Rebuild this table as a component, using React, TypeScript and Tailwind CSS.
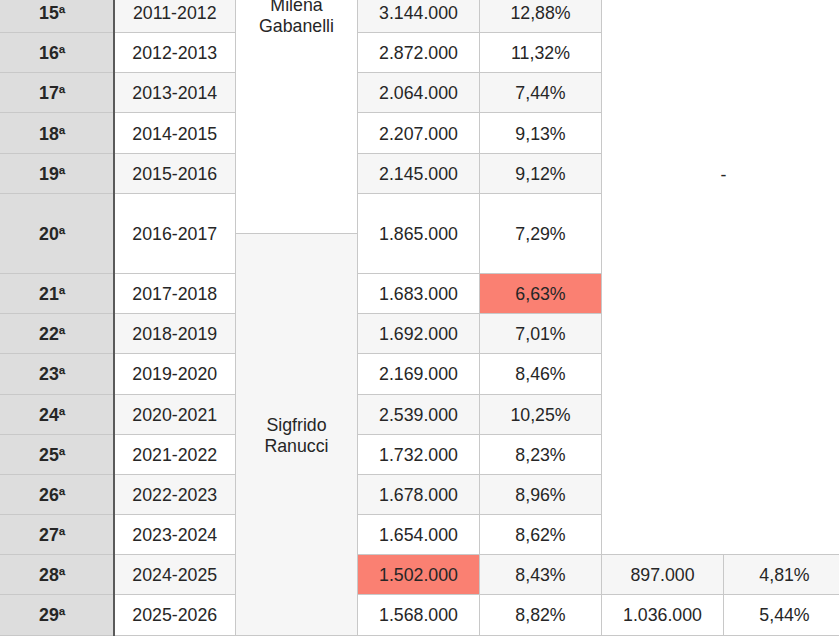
const rows = [
  { n: "15", y: "2011-2012", v: "3.144.000", s: "12,88%", g: true },
  { n: "16", y: "2012-2013", v: "2.872.000", s: "11,32%", g: false },
  { n: "17", y: "2013-2014", v: "2.064.000", s: "7,44%", g: true },
  { n: "18", y: "2014-2015", v: "2.207.000", s: "9,13%", g: false },
  { n: "19", y: "2015-2016", v: "2.145.000", s: "9,12%", g: true },
  { n: "20", y: "2016-2017", v: "1.865.000", s: "7,29%", g: false },
  { n: "21", y: "2017-2018", v: "1.683.000", s: "6,63%", g: false, hs: true },
  { n: "22", y: "2018-2019", v: "1.692.000", s: "7,01%", g: true },
  { n: "23", y: "2019-2020", v: "2.169.000", s: "8,46%", g: false },
  { n: "24", y: "2020-2021", v: "2.539.000", s: "10,25%", g: true },
  { n: "25", y: "2021-2022", v: "1.732.000", s: "8,23%", g: false },
  { n: "26", y: "2022-2023", v: "1.678.000", s: "8,96%", g: true },
  { n: "27", y: "2023-2024", v: "1.654.000", s: "8,62%", g: false },
  { n: "28", y: "2024-2025", v: "1.502.000", s: "8,43%", g: true, hv: true, v2: "897.000", s2: "4,81%" },
  { n: "29", y: "2025-2026", v: "1.568.000", s: "8,82%", g: false, v2: "1.036.000", s2: "5,44%" },
];

const cell = "border border-[#c8c8c8] px-2 text-center align-middle font-normal";

export default function App() {
  return (
    <div className="h-screen w-full overflow-hidden bg-white">
      <table
        className="-mt-[8px] -ml-[9px] w-[854px] min-w-[854px] table-fixed border-collapse text-[17.75px] leading-[21px] text-[#262626]"
        style={{ fontFamily: '"Liberation Sans", Arial, sans-serif' }}
      >
        <colgroup>
          <col className="w-[122px]" />
          <col className="w-[122px]" />
          <col className="w-[122px]" />
          <col className="w-[122px]" />
          <col className="w-[122px]" />
          <col className="w-[122px]" />
          <col className="w-[122px]" />
        </colgroup>
        <tbody>
          {rows.map((r) => {
            const bg = r.g ? "bg-[#f6f6f6]" : "bg-white";
            const double = r.n === "20";
            const out = [
              <tr key={r.n} className="h-[40.17px]">
                <th
                  rowSpan={double ? 2 : 1}
                  className="border border-[#c8c8c8] border-r-2 border-r-[#5a5a5a] bg-[#dddddd] px-2 pt-[2px] text-center font-bold"
                >
                  {r.n}ª
                </th>
                <td rowSpan={double ? 2 : 1} className={`${cell} ${bg} pt-[2px]`}>
                  {r.y}
                </td>
                {r.n === "15" && (
                  <td rowSpan={6} className={`${cell} bg-white !align-top pt-[2px]`}>
                    Milena
                    <br />
                    Gabanelli
                  </td>
                )}
                <td
                  rowSpan={double ? 2 : 1}
                  className={`${cell} ${r.hv ? "bg-[#fa8072]" : bg} pt-[2px]`}
                >
                  {r.v}
                </td>
                <td
                  rowSpan={double ? 2 : 1}
                  className={`${cell} ${r.hs ? "bg-[#fa8072]" : bg} pt-[2px]`}
                >
                  {r.s}
                </td>
                {r.n === "15" && (
                  <td
                    rowSpan={14}
                    colSpan={2}
                    className={`${cell} bg-white !align-top pt-[172px]`}
                  >
                    -
                  </td>
                )}
                {r.v2 && (
                  <>
                    <td className={`${cell} ${bg} pt-[2px]`}>{r.v2}</td>
                    <td className={`${cell} ${bg} pt-[2px]`}>{r.s2}</td>
                  </>
                )}
              </tr>,
            ];
            if (double) {
              out.push(
                <tr key="20b" className="h-[40.17px]">
                  <td rowSpan={10} className={`${cell} bg-[#f6f6f6] pt-[4px]`}>
                    Sigfrido
                    <br />
                    Ranucci
                  </td>
                </tr>
              );
            }
            return out;
          })}
        </tbody>
      </table>
    </div>
  );
}
